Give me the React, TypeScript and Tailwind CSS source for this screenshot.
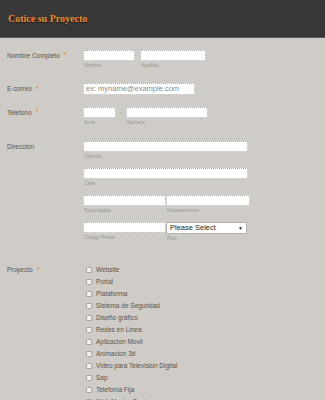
import React from "react";

const Input = ({ w, placeholder }: { w: string; placeholder?: string }) => (
  <div
    className={`${w} h-[11px] bg-white border border-dotted border-[#a9a6a1] rounded-[2px] flex items-center px-[2px] text-[7.5px] leading-none text-[#8a8a8a] overflow-hidden whitespace-nowrap`}
  >
    {placeholder}
  </div>
);

const Sub = ({ children }: { children?: React.ReactNode }) => (
  <div className="h-[8px] pt-[2px] text-[5px] leading-none text-[#9a9893] pl-[1px] whitespace-nowrap">{children}</div>
);

const Label = ({ text, req, h = "h-[11px]" }: { text: string; req?: boolean; h?: string }) => (
  <div className={`w-[83px] shrink-0 pl-[7px] ${h} flex items-center text-[6.5px] text-[#555350] whitespace-nowrap`}>
    {text}
    {req && <span className="ml-[4px] text-[#e8802c] text-[7px]">*</span>}
  </div>
);

const items = [
  "Website",
  "Portal",
  "Plataforma",
  "Sistema de Seguridad",
  "Diseño gráfico",
  "Redes en Linea",
  "Aplicacion Movil",
  "Animacion 3d",
  "Video para Television Digital",
  "Sap",
  "Telefonia Fija",
  "Web Master Services",
];

export default function App() {
  return (
    <div
      className="w-[325px] h-[400px] overflow-hidden bg-[#cfccc7]"
      style={{ fontFamily: '"Liberation Sans", Arial, sans-serif' }}
    >
      <div className="h-[37px] bg-[#383838] flex items-center pl-[8px]">
        <span
          className="text-[10px] font-bold text-[#ee8a2a]"
          style={{ fontFamily: '"Liberation Serif", "Times New Roman", serif', textShadow: "0 1px 1px #1a1a1a" }}
        >
          Cotice su Proyecto
        </span>
      </div>
      <div className="h-[1px] bg-[#5a5a58]" />

      {/* Nombre */}
      <div className="flex mt-[12px]">
        <Label text="Nombre Completo" req />
        <div className="flex gap-[5px]">
          <div>
            <Input w="w-[52px]" />
            <Sub>Nombre</Sub>
          </div>
          <div>
            <Input w="w-[66px]" />
            <Sub>Apellido</Sub>
          </div>
        </div>
      </div>

      {/* Email */}
      <div className="flex mt-[14px]">
        <Label text="E-correo" req h="h-[12px]" />
        <div className="w-[112px] h-[12px] bg-white border border-dotted border-[#a9a6a1] rounded-[2px] flex items-center px-[2px] text-[7.5px] leading-none text-[#8a8a8a] whitespace-nowrap overflow-hidden">
          ex: myname@example.com
        </div>
      </div>

      {/* Telefono */}
      <div className="flex mt-[12px]">
        <Label text="Telefono" req />
        <div className="flex">
          <div>
            <Input w="w-[33px]" />
            <Sub>Area</Sub>
          </div>
          <div className="w-[10px] h-[11px] flex items-center justify-center text-[6px] text-[#777]">-</div>
          <div>
            <Input w="w-[82px]" />
            <Sub>Numero</Sub>
          </div>
        </div>
      </div>

      {/* Direccion */}
      <div className="flex mt-[15px]">
        <Label text="Dirección" />
        <div className="flex flex-col gap-[8px]">
          <div>
            <Input w="w-[165px]" />
            <Sub>Colonia</Sub>
          </div>
          <div>
            <Input w="w-[165px]" />
            <Sub>Calle</Sub>
          </div>
          <div className="flex">
            <div>
              <Input w="w-[83px]" />
              <Sub>Tegucigalpa</Sub>
            </div>
            <div>
              <Input w="w-[84px]" />
              <Sub>Departamento</Sub>
            </div>
          </div>
          <div className="flex">
            <div>
              <Input w="w-[83px]" />
              <Sub>Codigo Postal</Sub>
            </div>
            <div>
              <div className="w-[81px] h-[12px] bg-white border border-[#b5b2ad] rounded-[1px] flex items-center justify-between px-[3px] text-[7.5px] leading-none text-[#222]">
                <span>Please Select</span>
                <span className="text-[5px]">▼</span>
              </div>
              <Sub>Pais</Sub>
            </div>
          </div>
        </div>
      </div>

      {/* Proyecto */}
      <div className="flex mt-[22px]">
        <Label text="Proyecto" req h="h-[12px]" />
        <div className="flex flex-col pl-[3px]">
          {items.map((it) => (
            <div key={it} className="h-[12px] flex items-center">
              <div className="w-[6px] h-[6px] bg-[#f4f3f1] border border-[#a8a6a2] rounded-[1px]" />
              <span className="ml-[4px] text-[6.5px] text-[#55534f] whitespace-nowrap">{it}</span>
            </div>
          ))}
        </div>
      </div>
    </div>
  );
}
